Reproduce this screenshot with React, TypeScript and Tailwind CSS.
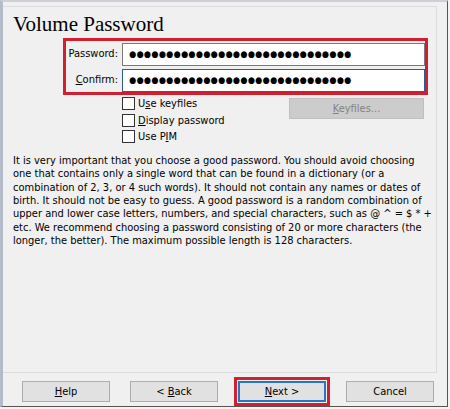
import type { ReactNode } from 'react';

const uiFont = "font-['DejaVu_Sans_Condensed','DejaVu_Sans',Tahoma,sans-serif] font-stretch-condensed";

const description = [
  'It is very important that you choose a good password. You should avoid choosing',
  'one that contains only a single word that can be found in a dictionary (or a',
  'combination of 2, 3, or 4 such words). It should not contain any names or dates of',
  'birth. It should not be easy to guess. A good password is a random combination of',
  'upper and lower case letters, numbers, and special characters, such as @ ^ = $ * +',
  'etc. We recommend choosing a password consisting of 20 or more characters (the',
  'longer, the better). The maximum possible length is 128 characters.',
];

const mask = '●'.repeat(30);

function Checkbox({ label }: { label: ReactNode }) {
  return (
    <label className="flex items-center gap-[3px]">
      <span className="w-[13px] h-[13px] border border-[#333333] bg-white shrink-0" />
      <span className="leading-[13px]">{label}</span>
    </label>
  );
}

function Button({ children, primary }: { children: ReactNode; primary?: boolean }) {
  return (
    <button
      type="button"
      className={
        primary
          ? 'w-[88px] h-[21px] bg-[#e1e1e1] border-2 border-[#2a74c6] text-black text-[11px] leading-[17px]'
          : 'w-[88px] h-[21px] bg-[#e1e1e1] border border-[#adadad] text-black text-[11px] leading-[19px]'
      }
    >
      {children}
    </button>
  );
}

export default function App() {
  return (
    <div className={`w-[450px] h-[409px] bg-[#f3f3f3] text-black text-[11px] ${uiFont}`}>
      <div className="w-[448px] h-[407px] flex flex-col bg-[#f0f0f0] border-l-[3px] border-l-[#b3bcc8] border-t-2 border-t-[#cdd1d7] border-r border-r-[#555555] border-b border-b-[#555555]">
        <section className="mt-[4px] w-[434px] h-[367px] border-t border-r border-b border-[#dcdcdc] pl-[10px] pt-[5px]">
          <h1 className="font-['Liberation_Serif','Times_New_Roman',serif] font-normal text-[21px] leading-[24px] h-[24px]">
            Volume Password
          </h1>

          <div className="mt-[2px] ml-[50px] w-[365px] border-[3px] border-[#d21f2e] pt-[2px]">
            <div className="flex items-center gap-[4px] h-[23px]">
              <span className="w-[52px] text-right">Password:</span>
              <div className="w-[303px] h-[23px] border border-[#7a7a7a] bg-white pl-[6px] flex items-center">
                <span className="font-['DejaVu_Sans',sans-serif] text-[9px] tracking-[0.35px] leading-none">{mask}</span>
              </div>
            </div>
            <div className="flex items-center gap-[4px] h-[23px] mt-[3px]">
              <span className="w-[52px] text-right">
                <span className="underline">C</span>onfirm:
              </span>
              <div className="w-[303px] h-[23px] border border-[#2d5b98] bg-white pl-[6px] flex items-center">
                <span className="font-['DejaVu_Sans',sans-serif] text-[9px] tracking-[0.35px] leading-none">{mask}</span>
              </div>
            </div>
          </div>

          <div className="ml-[109px] mt-[2px] w-[302px] flex justify-between items-start">
            <div className="flex flex-col">
              <div className="h-[17px] flex items-start">
                <Checkbox label={<>U<span className="underline">s</span>e keyfiles</>} />
              </div>
              <div className="h-[16px] flex items-start">
                <Checkbox label={<><span className="underline">D</span>isplay password</>} />
              </div>
              <div className="h-[17px] flex items-start">
                <Checkbox label={<>Use P<span className="underline">I</span>M</>} />
              </div>
            </div>
            <button
              type="button"
              disabled
              className="mt-[1px] w-[135px] h-[21px] bg-[#cccccc] border border-[#bfbfbf] text-[#838383] text-[11px] leading-[19px]"
            >
              <span className="underline">K</span>eyfiles...
            </button>
          </div>

          <p className="mt-[7px] leading-[13.33px] whitespace-nowrap">
            {description.map((line) => (
              <span key={line} className="block">
                {line}
              </span>
            ))}
          </p>
        </section>

        <div className="mt-[4px] ml-[19px] flex items-center h-[29px]">
          <Button>
            <span className="underline">H</span>elp
          </Button>
          <div className="ml-[20px]">
            <Button>
              &lt; <span className="underline">B</span>ack
            </Button>
          </div>
          <div className="ml-[16px] border-[3px] border-[#d21f2e] p-[1px]">
            <Button primary>
              <span className="underline">N</span>ext &gt;
            </Button>
          </div>
          <div className="ml-[16px]">
            <Button>Cancel</Button>
          </div>
        </div>
      </div>
    </div>
  );
}
